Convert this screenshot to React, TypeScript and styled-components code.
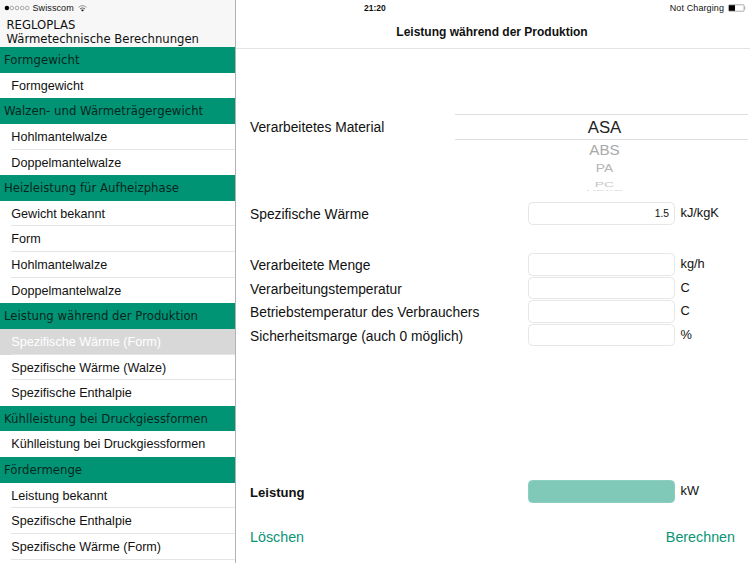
import React, { useState } from "react";
import styled, { createGlobalStyle } from "styled-components";

const sections = [
  { title: "Formgewicht", items: ["Formgewicht"] },
  {
    title: "Walzen- und Wärmeträgergewicht",
    items: ["Hohlmantelwalze", "Doppelmantelwalze"],
  },
  {
    title: "Heizleistung für Aufheizphase",
    items: ["Gewicht bekannt", "Form", "Hohlmantelwalze", "Doppelmantelwalze"],
  },
  {
    title: "Leistung während der Produktion",
    items: [
      "Spezifische Wärme (Form)",
      "Spezifische Wärme (Walze)",
      "Spezifische Enthalpie",
    ],
  },
  {
    title: "Kühlleistung bei Druckgiessformen",
    items: ["Kühlleistung bei Druckgiessformen"],
  },
  {
    title: "Fördermenge",
    items: [
      "Leistung bekannt",
      "Spezifische Enthalpie",
      "Spezifische Wärme (Form)",
    ],
  },
];

const fields = [
  { label: "Verarbeitete Menge", unit: "kg/h" },
  { label: "Verarbeitungstemperatur", unit: "C" },
  { label: "Betriebstemperatur des Verbrauchers", unit: "C" },
  { label: "Sicherheitsmarge (auch 0 möglich)", unit: "%" },
];

const App = () => {
  const [selected, setSelected] = useState("3-0");
  return (
    <>
      <GlobalStyle />
      <Screen>
        <Sidebar>
          <SidebarHead>
            <Carrier>
              <Signal />
              <span>Swisscom</span>
              <Wifi />
            </Carrier>
            <Brand>
              REGLOPLAS
              <br />
              Wärmetechnische Berechnungen
            </Brand>
          </SidebarHead>
          {sections.map((section, s) => (
            <section key={section.title}>
              <SectionTitle>{section.title}</SectionTitle>
              {section.items.map((item, i) => (
                <MenuRow
                  key={item}
                  $active={selected === `${s}-${i}`}
                  onClick={() => setSelected(`${s}-${i}`)}
                >
                  <MenuLabel
                    $line={i < section.items.length - 1 || s === 5}
                  >
                    {item}
                  </MenuLabel>
                </MenuRow>
              ))}
            </section>
          ))}
        </Sidebar>
        <Main>
          <MainHead>
            <StatusBar>
              <Clock>21:20</Clock>
              <Power>
                Not Charging
                <Battery />
              </Power>
            </StatusBar>
            <Title>Leistung während der Produktion</Title>
          </MainHead>
          <MaterialRow>
            <Label>Verarbeitetes Material</Label>
            <Picker>
              <PickerSelected>ASA</PickerSelected>
              <PickerItem $h={19} $size={15.2} $color="#a9a9a9" $sy={0.95}>
                <span>ABS</span>
              </PickerItem>
              <PickerItem $h={20} $size={13.8} $color="#b5b5b5" $sy={0.8}>
                <span>PA</span>
              </PickerItem>
              <PickerItem $h={9} $size={14} $color="#c4c4c4" $sy={0.52}>
                <span>PC</span>
              </PickerItem>
              <PickerItem $h={4} $size={13} $color="#d2d2d2" $sy={0.14}>
                <span>HDPE</span>
              </PickerItem>
            </Picker>
          </MaterialRow>
          <HeatRow>
            <Label>Spezifische Wärme</Label>
            <Input defaultValue="1.5" />
            <Unit>kJ/kgK</Unit>
          </HeatRow>
          <Fields>
            {fields.map((field) => (
              <FieldRow key={field.label}>
                <Label>{field.label}</Label>
                <Input />
                <Unit>{field.unit}</Unit>
              </FieldRow>
            ))}
          </Fields>
          <ResultRow>
            <Label $bold>Leistung</Label>
            <Result />
            <Unit>kW</Unit>
          </ResultRow>
          <Actions>
            <TextButton>Löschen</TextButton>
            <TextButton>Berechnen</TextButton>
          </Actions>
        </Main>
      </Screen>
    </>
  );
};

export default App;

const Signal = () => (
  <svg width="26" height="6" viewBox="0 0 26 6">
    <circle cx="2.9" cy="3" r="2.2" fill="#000" />
    {[7.8, 13, 18.2, 23.2].map((cx) => (
      <circle
        key={cx}
        cx={cx}
        cy="3"
        r="1.8"
        fill="none"
        stroke="#777"
        strokeWidth="0.6"
      />
    ))}
  </svg>
);

const Wifi = () => (
  <svg width="9" height="7" viewBox="0 0 9 7" fill="none">
    <path d="M0.6 2.3Q4.5 -1 8.4 2.3" stroke="#777" strokeWidth="0.8" />
    <path d="M2 3.9Q4.5 1.8 7 3.9" stroke="#555" strokeWidth="0.9" />
    <path d="M3 5Q4.5 3.9 6 5L4.5 6.6Z" fill="#111" />
  </svg>
);

const Battery = () => (
  <svg width="19" height="8" viewBox="0 0 19 8">
    <rect
      x="0.5"
      y="0.8"
      width="15.6"
      height="6.4"
      rx="0.8"
      fill="none"
      stroke="#777"
      strokeWidth="0.6"
    />
    <rect x="1" y="1.2" width="6" height="5.6" fill="#000" />
    <path d="M16.8 2.7Q18 4 16.8 5.3Z" fill="#333" />
  </svg>
);

const GlobalStyle = createGlobalStyle`
  * {
    box-sizing: border-box;
  }
  body {
    margin: 0;
    overflow: hidden;
    background: #fff;
    color: #111;
    font-family: "Liberation Sans", Arial, sans-serif;
  }
`;

const Screen = styled.div`
  display: flex;
  width: 750px;
  height: 563px;
  overflow: hidden;
`;

const Sidebar = styled.aside`
  flex: none;
  width: 236px;
  border-right: 1px solid #b2b2b4;
  overflow: hidden;
`;

const SidebarHead = styled.header`
  height: 47.1px;
  background: #f7f7f7;
`;

const Carrier = styled.div`
  display: flex;
  align-items: center;
  height: 16px;
  padding-left: 4px;
  font-size: 9px;
  letter-spacing: 0.1px;
  & span {
    margin: 0 4px 0 2.5px;
  }
`;

const Brand = styled.div`
  padding: 1.5px 0 0 6.5px;
  font-family: "DejaVu Sans", Verdana, sans-serif;
  font-size: 11.65px;
  line-height: 14px;
  white-space: nowrap;
`;

const SectionTitle = styled.div`
  height: 25.63px;
  padding: 1px 0 0 4px;
  background: #009474;
  color: #06271f;
  font-family: "DejaVu Sans", Verdana, sans-serif;
  font-size: 11.7px;
  line-height: 25.6px;
  letter-spacing: 0.02px;
  white-space: nowrap;
`;

const MenuRow = styled.div<{ $active: boolean }>`
  height: 25.63px;
  padding-left: 11.3px;
  background: ${({ $active }) => ($active ? "#d8d8d8" : "#fff")};
  color: ${({ $active }) => ($active ? "#fff" : "#111")};
  cursor: pointer;
`;

const MenuLabel = styled.div<{ $line: boolean }>`
  height: 100%;
  border-bottom: 1px solid ${({ $line }) => ($line ? "#e4e4e5" : "transparent")};
  font-size: 12.6px;
  line-height: 26.8px;
  white-space: nowrap;
`;

const Main = styled.main`
  flex: 1;
  display: flex;
  flex-direction: column;
`;

const MainHead = styled.header`
  height: 48.5px;
  border-bottom: 1px solid #e3e3e3;
`;

const StatusBar = styled.div`
  display: flex;
  justify-content: space-between;
  align-items: center;
  height: 16px;
  padding: 0 3px 0 128px;
  font-size: 9px;
`;

const Clock = styled.span`
  font-weight: bold;
  font-size: 8.5px;
`;

const Power = styled.span`
  display: flex;
  align-items: center;
  gap: 4px;
  letter-spacing: 0.1px;
`;

const Title = styled.h1`
  margin: 0;
  padding: 6px 2px 0 0;
  text-align: center;
  font-size: 12px;
  line-height: 20px;
`;

const Row = styled.div`
  display: grid;
  grid-template-columns: 278px 147px 1fr;
  padding-left: 14px;
`;

const MaterialRow = styled(Row)`
  grid-template-columns: 205px 1fr;
  height: 88px;
  margin-top: 65.5px;
  padding-right: 2px;
  & > label {
    line-height: 28px;
  }
`;

const HeatRow = styled(Row)`
  height: 23px;
`;

const Fields = styled.div`
  display: grid;
  grid-auto-rows: 23.5px;
  margin-top: 28px;
`;

const FieldRow = styled(Row)``;

const ResultRow = styled(Row)`
  margin-top: 133px;
`;

const Label = styled.label<{ $bold?: boolean }>`
  font-size: ${({ $bold }) => ($bold ? "13.1px" : "13.8px")};
  font-weight: ${({ $bold }) => ($bold ? "bold" : "normal")};
  line-height: 25px;
  white-space: nowrap;
`;

const Input = styled.input`
  width: 147px;
  height: 22.5px;
  padding: 0 5px;
  border: 1px solid #e6e6e6;
  border-radius: 4.5px;
  background: #fff;
  outline: none;
  color: #111;
  font-family: inherit;
  font-size: 10.3px;
  text-align: right;
`;

const Result = styled.output`
  width: 147px;
  height: 22.5px;
  border: 1px solid #8ccfc0;
  border-radius: 4.5px;
  background: #80c8b7;
`;

const Unit = styled.span`
  padding-left: 5.5px;
  font-size: 12.8px;
  line-height: 22px;
`;

const Picker = styled.div`
  display: flex;
  flex-direction: column;
  height: 78px;
  overflow: hidden;
`;

const PickerSelected = styled.div`
  flex: none;
  height: 26px;
  border-top: 1px solid #dedede;
  border-bottom: 1px solid #dedede;
  color: #222;
  font-size: 16.8px;
  line-height: 25px;
  text-align: center;
  text-indent: 6px;
`;

const PickerItem = styled.div<{
  $h: number;
  $size: number;
  $color: string;
  $sy: number;
}>`
  display: flex;
  flex: none;
  align-items: center;
  justify-content: center;
  height: ${({ $h }) => $h}px;
  padding-left: 6px;
  color: ${({ $color }) => $color};
  font-size: ${({ $size }) => $size}px;
  line-height: 1;
  & span {
    transform: scaleY(${({ $sy }) => $sy});
  }
`;

const Actions = styled.div`
  display: flex;
  justify-content: space-between;
  margin-top: 22px;
  padding: 0 15px 0 14px;
`;

const TextButton = styled.button`
  padding: 0;
  border: none;
  background: none;
  color: #0a9474;
  font-family: inherit;
  font-size: 14.3px;
  line-height: 20px;
  cursor: pointer;
`;
